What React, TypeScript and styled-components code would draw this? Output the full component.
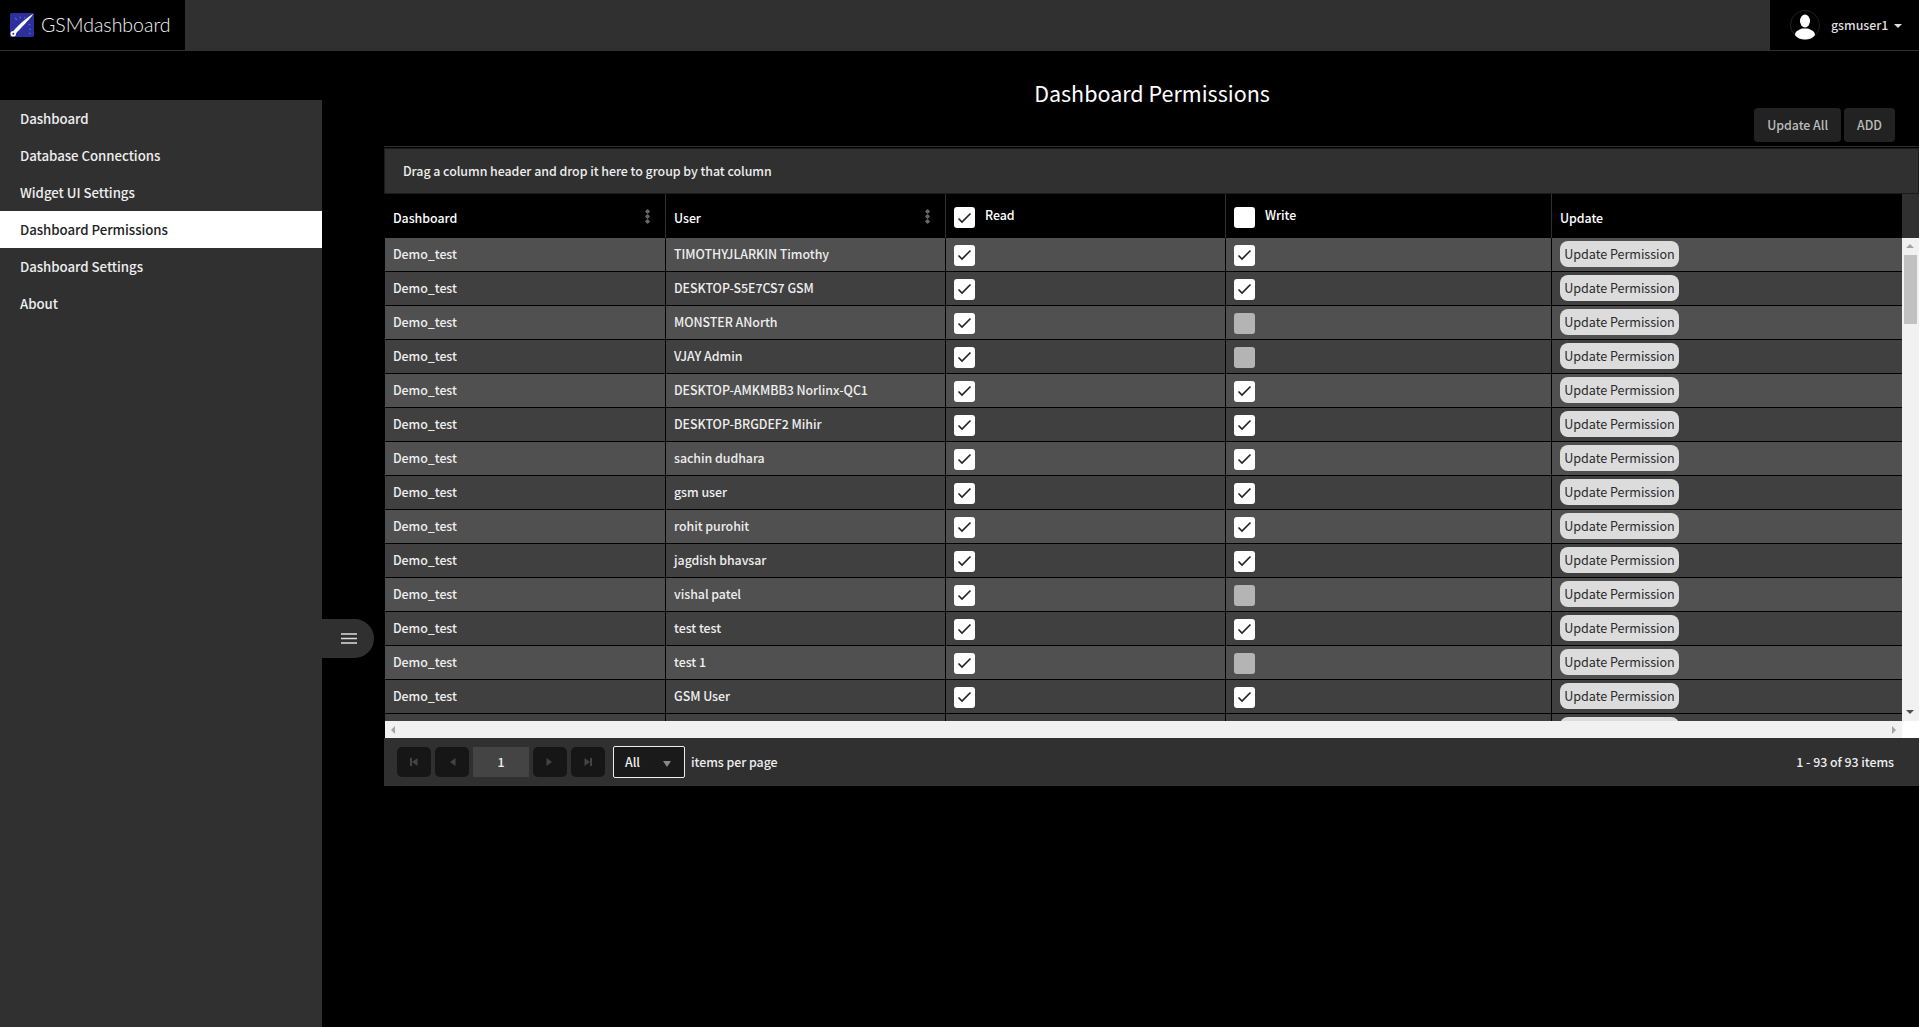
import React from 'react';
import styled, { createGlobalStyle } from 'styled-components';

const GlobalStyle = createGlobalStyle`
  html, body {
    margin: 0;
    height: 100%;
    background: #000;
    overflow: hidden;
  }
  body {
    color: #fff;
    font-family: "Noto Sans CJK SC", "Noto Sans", sans-serif;
    font-size: 12.4px;
    font-weight: 500;
    letter-spacing: -0.04px;
  }
`;

const Page = styled.div`
  display: flex;
  flex-direction: column;
  height: 1027px;
`;

const Header = styled.header`
  align-items: stretch;
  background: #303030;
  display: flex;
  flex: none;
  height: 50px;
  justify-content: space-between;
  padding-bottom: 1px;
`;

const Brand = styled.div`
  align-items: center;
  background: #000;
  box-sizing: border-box;
  display: flex;
  gap: 7px;
  padding-left: 10px;
  width: 185px;
`;

const BrandName = styled.span`
  color: #f4f4f4;
  font-family: "Lato", sans-serif;
  font-size: 19.5px;
  font-weight: 300;
  letter-spacing: 0;
  line-height: 24px;
`;

const UserMenu = styled.div`
  align-items: center;
  background: #000;
  box-sizing: border-box;
  display: flex;
  padding-left: 20px;
  width: 149px;
`;

const UserName = styled.span`
  color: #ddd;
  line-height: 20px;
  margin-left: 11px;
`;

const Caret = styled.span`
  border-left: 4px solid transparent;
  border-right: 4px solid transparent;
  border-top: 4px solid #ddd;
  margin-left: 6px;
  margin-top: 2px;
`;

const Body = styled.div`
  display: flex;
  flex: 1;
  min-height: 0;
`;

const Sidebar = styled.nav`
  background: #303030;
  flex: none;
  margin-top: 49px;
  position: relative;
  width: 322px;
`;

const NavItem = styled.div<{ $active?: boolean }>`
  background: ${p => (p.$active ? '#fff' : 'transparent')};
  color: ${p => (p.$active ? '#222' : '#eee')};
  font-size: 13.25px;
  height: 37px;
  line-height: 37px;
  padding-left: 20px;
`;

const Toggle = styled.div`
  align-items: center;
  background: #303030;
  border-radius: 0 20px 20px 0;
  box-sizing: border-box;
  display: flex;
  height: 39px;
  justify-content: center;
  left: 100%;
  padding-left: 2px;
  position: absolute;
  top: 519px;
  width: 52px;
`;

const Main = styled.main`
  display: flex;
  flex: 1;
  flex-direction: column;
  margin-left: 62px;
  min-width: 0;
`;

const Title = styled.h1`
  font-size: 21.5px;
  font-weight: 400;
  letter-spacing: 0;
  line-height: 30px;
  margin: 27px 0 0;
  padding-left: 1px;
  text-align: center;
`;

const Actions = styled.div`
  display: flex;
  gap: 3px;
  justify-content: flex-end;
  padding-right: 24px;
`;

const ActionButton = styled.button`
  background: #222;
  border: 0;
  border-radius: 4px;
  color: #bbb;
  font: inherit;
  height: 34px;
  letter-spacing: inherit;
  padding: 0 13px;
`;

const GridFrame = styled.section`
  border-top: 1px solid #303030;
  display: flex;
  flex-direction: column;
  margin-top: 4px;
  padding-top: 1px;
`;

const GroupBar = styled.div`
  background: #303030;
  border: 1px solid #1c1c1c;
  color: #eee;
  height: 44px;
  line-height: 44px;
  padding-left: 18px;
`;

const columns = '281px 280px 280px 326px 350px';

const HeadRow = styled.div`
  background: #303030;
  display: grid;
  grid-template-columns: 1517px 17px;
  height: 44px;
  margin-left: 1px;
`;

const HeadCells = styled.div`
  background: #000;
  display: grid;
  grid-template-columns: ${columns};
`;

const HeadCell = styled.div`
  align-items: center;
  border-right: 1px solid #303030;
  box-sizing: border-box;
  display: flex;
  justify-content: space-between;
  padding: 0 15px 0 8px;
  &:last-child { border-right: 0; }
`;

const HeadLabel = styled.span`
  line-height: 20px;
  padding-top: 4px;
`;

const CheckHead = styled.div`
  align-items: flex-start;
  border-right: 1px solid #303030;
  box-sizing: border-box;
  display: flex;
  gap: 10px;
  line-height: 20px;
  padding: 12px 8px 0;
`;

const CheckLabel = styled.span`
  margin-top: -1px;
`;

const Kebab = styled.span`
  background: radial-gradient(circle, #666 1.9px, transparent 2.3px) 0 0 / 5px 5px repeat-y;
  display: block;
  height: 15px;
  width: 5px;
`;

const BodyWrap = styled.div`
  display: grid;
  grid-template-columns: 1517px 17px;
  grid-template-rows: 483px 17px;
  margin-left: 1px;
`;

const Rows = styled.div`
  overflow: hidden;
`;

const Row = styled.div<{ $odd: boolean }>`
  background: ${p => (p.$odd ? '#505050' : '#404040')};
  border-bottom: 1px solid #000;
  box-sizing: border-box;
  display: grid;
  grid-template-columns: ${columns};
  height: 34px;
`;

const Cell = styled.div`
  align-items: center;
  border-right: 1px solid #000;
  box-sizing: border-box;
  color: #eee;
  display: flex;
  line-height: 31px;
  padding: 0 8px;
  &:last-child { border-right: 0; }
`;

const Check = styled.span<{ $dim?: boolean }>`
  align-items: center;
  background: ${p => (p.$dim ? '#b4b4b4' : '#fff')};
  border-radius: 3px;
  display: flex;
  flex: none;
  height: 21px;
  justify-content: center;
  margin-top: 1px;
  width: 21px;
`;

const PermissionButton = styled.button`
  background: #dcdcdc;
  border: 0;
  border-radius: 8px;
  color: #2a2a2a;
  font: inherit;
  font-size: 12.6px;
  font-weight: 400;
  height: 26px;
  letter-spacing: inherit;
  line-height: 24px;
  margin-top: -2px;
  padding: 0;
  white-space: nowrap;
  width: 119px;
`;

const ScrollY = styled.div`
  background: #f1f1f1;
  display: flex;
  flex-direction: column;
  position: relative;
`;

const ThumbY = styled.div`
  background: #c1c1c1;
  height: 69px;
  margin: 17px 2px 0;
`;

const ArrowUp = styled.span`
  border-bottom: 4px solid #a3a3a3;
  border-left: 4px solid transparent;
  border-right: 4px solid transparent;
  left: 4px;
  position: absolute;
  top: 6px;
`;

const ArrowDown = styled.span`
  border-left: 4px solid transparent;
  border-right: 4px solid transparent;
  border-top: 4px solid #505050;
  bottom: 7px;
  left: 4px;
  position: absolute;
`;

const ScrollX = styled.div`
  background: #f1f1f1;
  position: relative;
`;

const ArrowLeft = styled.span`
  border-bottom: 4px solid transparent;
  border-right: 4px solid #a3a3a3;
  border-top: 4px solid transparent;
  left: 6px;
  position: absolute;
  top: 5px;
`;

const ArrowRight = styled.span`
  border-bottom: 4px solid transparent;
  border-left: 4px solid #a3a3a3;
  border-top: 4px solid transparent;
  position: absolute;
  right: 6px;
  top: 5px;
`;

const Corner = styled.div`
  background: #fff;
`;

const Pager = styled.div`
  align-items: center;
  background: #303030;
  display: flex;
  height: 48px;
  justify-content: space-between;
  padding: 0 25px 0 13px;
`;

const PagerLeft = styled.div`
  align-items: center;
  display: flex;
  gap: 4px;
`;

const PageButton = styled.span`
  align-items: center;
  background: #161616;
  border-radius: 5px;
  display: flex;
  height: 30px;
  justify-content: center;
  width: 34px;
`;

const PageNumber = styled.span`
  background: #444;
  color: #eee;
  height: 30px;
  line-height: 30px;
  text-align: center;
  width: 56px;
`;

const PageSize = styled.div`
  align-items: center;
  background: #1a1a1a;
  border: 1px solid #eee;
  border-radius: 2px;
  box-sizing: border-box;
  color: #eee;
  display: flex;
  height: 32px;
  justify-content: space-between;
  margin-left: 4px;
  padding: 0 13px 0 11px;
  width: 72px;
`;

const SizeCaret = styled.span`
  border-left: 4.5px solid transparent;
  border-right: 4.5px solid transparent;
  border-top: 6px solid #888;
  margin-top: 3px;
`;

const PagerText = styled.span`
  color: #eee;
  line-height: 20px;
  margin-left: 2px;
`;

const nav = ['Dashboard', 'Database Connections', 'Widget UI Settings', 'Dashboard Permissions', 'Dashboard Settings', 'About'];

const users: [string, boolean][] = [
  ['TIMOTHYJLARKIN Timothy', true],
  ['DESKTOP-S5E7CS7 GSM', true],
  ['MONSTER ANorth', false],
  ['VJAY Admin', false],
  ['DESKTOP-AMKMBB3 Norlinx-QC1', true],
  ['DESKTOP-BRGDEF2 Mihir', true],
  ['sachin dudhara', true],
  ['gsm user', true],
  ['rohit purohit', true],
  ['jagdish bhavsar', true],
  ['vishal patel', false],
  ['test test', true],
  ['test 1', false],
  ['GSM User', true],
];

const Tick = () => (
  <svg width="15" height="12" viewBox="0 0 15 12" fill="none">
    <path d="M1.500 6.500 5 10 13.500 1.500" stroke="#222" strokeWidth="1.600" />
  </svg>
);

const CheckBox = ({ on }: { on: boolean }) => (
  <Check $dim={!on}>{on && <Tick />}</Check>
);

const Logo = () => (
  <svg width="24" height="24" viewBox="0 0 24 24">
    <rect width="24" height="24" rx="1.500" fill="#2c2f9c" />
    <path d="M5 5 7 7M10 3.500l.6 2M15 4l-.6 1.600M19 16l2 .6M18.500 12l2-.6M19 20l1.600 1" stroke="#5a5fc4" strokeWidth="1.200" />
    <path d="M23.500 .8C17 4.500 9 11.500 3 18.500l2.500 2.500C11 15 19 7 23.500 .8Z" fill="#fff" />
    <circle cx="3.300" cy="20.700" r="2.800" fill="#fff" />
    <circle cx="3.300" cy="20.700" r="1" fill="#2c2f9c" />
  </svg>
);

const Avatar = () => (
  <svg width="30" height="30" viewBox="0 0 30 30">
    <circle cx="15" cy="15" r="14.500" fill="#000" stroke="#222" />
    <ellipse cx="15" cy="11" rx="5" ry="6.500" fill="#fff" />
    <path d="M5 25c0-4 4-5 7-6.500h6c3 1.500 7 2.500 7 6.500-2 3-6 4.500-10 4.500S7 28 5 25Z" fill="#fff" />
  </svg>
);

const Burger = () => (
  <svg width="18" height="11" viewBox="0 0 18 11">
    <path d="M1 1h16M1 5.500h16M1 10h16" stroke="#ddd" strokeWidth="1.500" />
  </svg>
);

const PagerIcon = ({ dir, edge }: { dir: 'l' | 'r'; edge?: boolean }) => (
  <svg width="10" height="10" viewBox="0 0 10 10" fill="#444">
    {dir === 'l' ? <path d="M8.500 1v8L3 5Z" /> : <path d="M1.500 1v8L7 5Z" />}
    {edge && (dir === 'l' ? <rect x="1" y="1" width="2" height="8" /> : <rect x="7" y="1" width="2" height="8" />)}
  </svg>
);

const App = () => {
  return (
    <Page>
      <GlobalStyle />
      <Header>
        <Brand>
          <Logo />
          <BrandName>GSMdashboard</BrandName>
        </Brand>
        <UserMenu>
          <Avatar />
          <UserName>gsmuser1</UserName>
          <Caret />
        </UserMenu>
      </Header>
      <Body>
        <Sidebar>
          {nav.map(item => (
            <NavItem key={item} $active={item === 'Dashboard Permissions'}>{item}</NavItem>
          ))}
          <Toggle><Burger /></Toggle>
        </Sidebar>
        <Main>
          <Title>Dashboard Permissions</Title>
          <Actions>
            <ActionButton>Update All</ActionButton>
            <ActionButton>ADD</ActionButton>
          </Actions>
          <GridFrame>
            <GroupBar>Drag a column header and drop it here to group by that column</GroupBar>
            <HeadRow>
              <HeadCells>
                <HeadCell><HeadLabel>Dashboard</HeadLabel><Kebab /></HeadCell>
                <HeadCell><HeadLabel>User</HeadLabel><Kebab /></HeadCell>
                <CheckHead><Check><Tick /></Check><CheckLabel>Read</CheckLabel></CheckHead>
                <CheckHead><Check /><CheckLabel>Write</CheckLabel></CheckHead>
                <HeadCell><HeadLabel>Update</HeadLabel></HeadCell>
              </HeadCells>
            </HeadRow>
            <BodyWrap>
              <Rows>
                {users.map(([name, write], i) => (
                  <Row key={name} $odd={i % 2 === 0}>
                    <Cell>Demo_test</Cell>
                    <Cell>{name}</Cell>
                    <Cell><CheckBox on /></Cell>
                    <Cell><CheckBox on={write} /></Cell>
                    <Cell><PermissionButton>Update Permission</PermissionButton></Cell>
                  </Row>
                ))}
                <Row $odd={false}>
                  <Cell />
                  <Cell />
                  <Cell />
                  <Cell />
                  <Cell><PermissionButton /></Cell>
                </Row>
              </Rows>
              <ScrollY>
                <ArrowUp />
                <ThumbY />
                <ArrowDown />
              </ScrollY>
              <ScrollX>
                <ArrowLeft />
                <ArrowRight />
              </ScrollX>
              <Corner />
            </BodyWrap>
            <Pager>
              <PagerLeft>
                <PageButton><PagerIcon dir="l" edge /></PageButton>
                <PageButton><PagerIcon dir="l" /></PageButton>
                <PageNumber>1</PageNumber>
                <PageButton><PagerIcon dir="r" /></PageButton>
                <PageButton><PagerIcon dir="r" edge /></PageButton>
                <PageSize>All<SizeCaret /></PageSize>
                <PagerText>items per page</PagerText>
              </PagerLeft>
              <PagerText>1 - 93 of 93 items</PagerText>
            </Pager>
          </GridFrame>
        </Main>
      </Body>
    </Page>
  );
};

export default App;
